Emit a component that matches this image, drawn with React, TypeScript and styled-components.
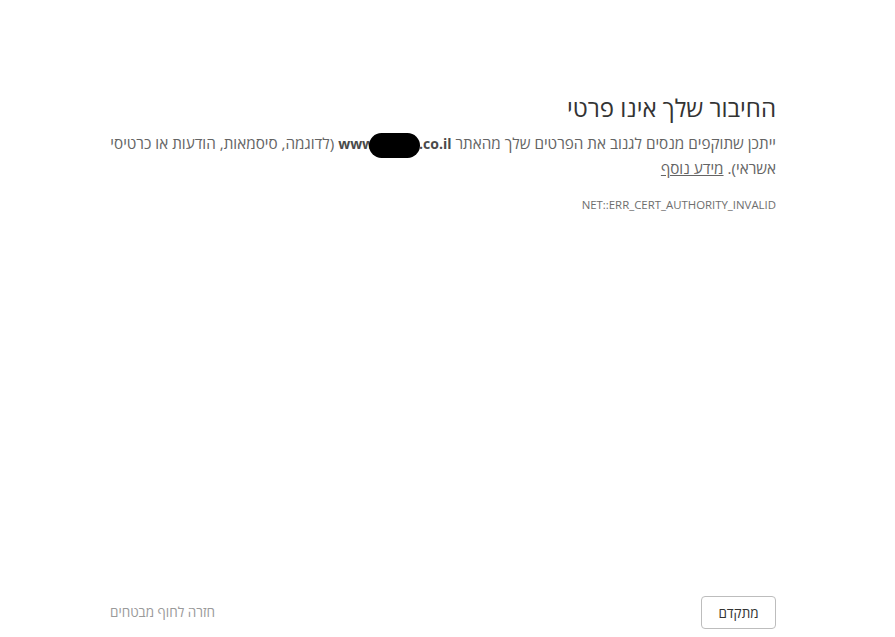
import React from 'react';
import styled, { createGlobalStyle } from 'styled-components';

const GlobalStyle = createGlobalStyle`
  html, body {
    margin: 0;
    padding: 0;
    background: #fff;
    height: 100%;
  }
  #root {
    height: 100%;
  }
`;

const Page = styled.div`
  direction: rtl;
  height: 637px;
  box-sizing: border-box;
  padding: 90px 119px 8px 105px;
  display: flex;
  flex-direction: column;
  justify-content: space-between;
  font-family: "Open Sans", "DejaVu Sans", sans-serif;
  color: #646464;
`;

const Main = styled.div`
  display: flex;
  flex-direction: column;
`;

const Title = styled.h1`
  margin: 0 0 5px;
  font-size: 24px;
  font-weight: 400;
  line-height: 36px;
  color: #333;
`;

const Text = styled.p`
  margin: 0;
  font-size: 15.25px;
  line-height: 25px;
`;

const Domain = styled.span`
  direction: ltr;
  unicode-bidi: isolate;
  font-weight: 700;
  font-size: 14px;
  color: #4a4a4a;
`;

const Redact = styled.span`
  display: inline-block;
  width: 51px;
  height: 25px;
  margin: -5px -1px -5px -5px;
  border-radius: 13px;
  background: #000;
  vertical-align: middle;
`;

const More = styled.a`
  color: #646464;
  text-decoration: underline;
`;

const Code = styled.div`
  margin-top: 16px;
  font-size: 11.4px;
  color: #6e6e6e;
  direction: ltr;
  text-align: right;
`;

const Nav = styled.div`
  display: flex;
  justify-content: space-between;
  align-items: center;
`;

const Advanced = styled.button`
  font-family: inherit;
  font-size: 13.5px;
  color: #333;
  background: #fff;
  border: 1px solid #bdbdbd;
  border-radius: 4px;
  padding: 0 14px;
  height: 33px;
  min-width: 75px;
`;

const Back = styled.span`
  font-size: 13.5px;
  color: #9a9a9a;
  margin-left: 5px;
  margin-top: -2px;
`;

export default function App() {
  return (
    <>
      <GlobalStyle />
      <Page>
        <Main>
          <Title>החיבור שלך אינו פרטי</Title>
          <Text>
            ייתכן שתוקפים מנסים לגנוב את הפרטים שלך מהאתר{' '}
            <Domain>
              www<Redact />.co.il
            </Domain>{' '}
            (לדוגמה, סיסמאות, הודעות או כרטיסי אשראי).{' '}
            <More href="#">מידע נוסף</More>
          </Text>
          <Code>NET::ERR_CERT_AUTHORITY_INVALID</Code>
        </Main>
        <Nav>
          <Advanced>מתקדם</Advanced>
          <Back>חזרה לחוף מבטחים</Back>
        </Nav>
      </Page>
    </>
  );
}
